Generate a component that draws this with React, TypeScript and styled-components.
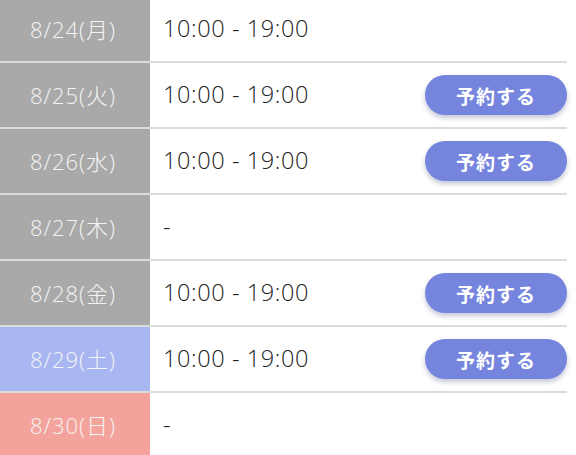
import React from "react";
import styled, { createGlobalStyle } from "styled-components";

const Global = createGlobalStyle`
  html, body { margin: 0; padding: 0; background: #fff; }
  body { font-family: "Open Sans", "Noto Sans CJK JP", sans-serif; overflow: hidden; }
`;

const Table = styled.div`
  width: 567px;
  margin-top: -3px;
  display: flex;
  flex-direction: column;
`;

type Kind = "weekday" | "sat" | "sun";

const bg: Record<Kind, string> = {
  weekday: "#a9a9a9",
  sat: "#a8b6f2",
  sun: "#f3a39b",
};

const Row = styled.div`
  display: grid;
  grid-template-columns: 150px 1fr;
  height: 64px;
  border-bottom: 2px solid #dcdcdc;
`;

const DateCell = styled.div<{ $kind: Kind }>`
  background: ${(p) => bg[p.$kind]};
  color: #f4f4f4;
  font-size: 22px;
  font-weight: 300;
  letter-spacing: 1px;
  line-height: 1;
  display: flex;
  align-items: center;
  justify-content: center;
  padding-right: 4px;
`;

const Body = styled.div`
  display: flex;
  align-items: center;
  justify-content: space-between;
  padding-left: 13px;
`;

const Hours = styled.span`
  color: #222;
  font-size: 23.5px;
  line-height: 1;
  font-weight: 300;
  letter-spacing: 0.6px;
`;

const Reserve = styled.button`
  width: 142px;
  height: 40px;
  border: none;
  border-radius: 20px;
  background: #7585de;
  color: #fff;
  font-family: "Noto Sans CJK JP", sans-serif;
  font-size: 19px;
  font-weight: 700;
  letter-spacing: 1px;
  line-height: 1;
  box-shadow: 0 3px 5px rgba(60, 70, 120, 0.3);
  padding: 0;
  cursor: pointer;
`;

const days: { date: string; kind: Kind; hours: string; button: boolean }[] = [
  { date: "8/24(月)", kind: "weekday", hours: "10:00 - 19:00", button: false },
  { date: "8/25(火)", kind: "weekday", hours: "10:00 - 19:00", button: true },
  { date: "8/26(水)", kind: "weekday", hours: "10:00 - 19:00", button: true },
  { date: "8/27(木)", kind: "weekday", hours: "-", button: false },
  { date: "8/28(金)", kind: "weekday", hours: "10:00 - 19:00", button: true },
  { date: "8/29(土)", kind: "sat", hours: "10:00 - 19:00", button: true },
  { date: "8/30(日)", kind: "sun", hours: "-", button: false },
];

export default function App() {
  return (
    <>
      <Global />
      <Table>
        {days.map((d) => (
          <Row key={d.date}>
            <DateCell $kind={d.kind}>{d.date}</DateCell>
            <Body>
              <Hours>{d.hours}</Hours>
              {d.button && <Reserve>予約する</Reserve>}
            </Body>
          </Row>
        ))}
      </Table>
    </>
  );
}
